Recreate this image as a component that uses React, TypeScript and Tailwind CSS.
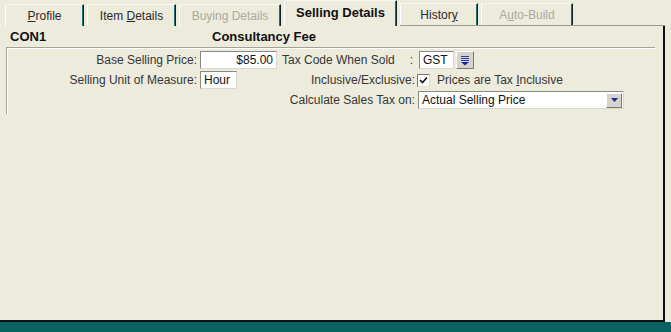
import React from "react";

const tabs = [
  { label: "Profile", key: "P", w: "w-[79px]" },
  { label: "Item Details", key: "D", w: "w-[89px]" },
  { label: "Buying Details", key: "", w: "w-[102px]", disabled: true },
];

function Accel({ text, ch }: { text: string; ch: string }) {
  if (!ch) return <>{text}</>;
  const i = text.indexOf(ch);
  if (i < 0) return <>{text}</>;
  return (
    <>
      {text.slice(0, i)}
      <span className="underline underline-offset-1">{ch}</span>
      {text.slice(i + 1)}
    </>
  );
}

function Tab({ label, ch, w, disabled, active }: { label: string; ch: string; w: string; disabled?: boolean; active?: boolean }) {
  return (
    <div
      className={`${w} ${active ? "h-[26px] font-bold text-[13px] text-[#111]" : "h-[22px]"} ${disabled ? "text-[#abaaa0]" : active ? "" : "text-[#2a2a2a]"} flex items-center justify-center border-t border-l border-t-[#f8f8f0] border-l-white border-r border-r-[#0c2424] shadow-[inset_-1px_0_0_#1f6e6e] rounded-tl-[2px]`}
    >
      <span className={active ? "pb-[2px]" : "pt-[1px]"}>
        <Accel text={label} ch={ch} />
      </span>
    </div>
  );
}

function Input({ w, value, right }: { w: string; value: string; right?: boolean }) {
  return (
    <div
      className={`${w} h-[18px] bg-white border border-t-[#8a8a84] border-l-[#8a8a84] border-r-[#d8d8d0] border-b-[#d8d8d0] px-[3px] flex items-center ${right ? "justify-end" : ""} text-[#111]`}
    >
      {value}
    </div>
  );
}

export default function App() {
  return (
    <div className="w-[671px] h-[332px] bg-[#ecebdc] font-['Liberation_Sans',Arial,sans-serif] text-[12px] text-[#363636] flex flex-col overflow-hidden">
      <div className="flex items-end h-[26px] pl-[5px] gap-[3px]">
        {tabs.map((t) => (
          <Tab key={t.label} label={t.label} ch={t.key} w={t.w} disabled={t.disabled} />
        ))}
        <Tab label="Selling Details" ch="g" w="w-[113px]" active />
        <div className="flex-1 mr-[6px] h-[26px] border-b border-[#9c9b92] flex items-end gap-[3px]">
          <Tab label="History" ch="y" w="w-[78px]" />
          <Tab label="Auto-Build" ch="u" w="w-[92px]" disabled />
        </div>
      </div>

      <div className="w-[665px] h-[296px] border-r-2 border-r-[#111] border-b-2 border-b-[#111] flex flex-col">
        <div className="flex h-[21px] items-center pl-[10px] pt-[1px] font-bold text-[13px] text-[#111]">
          <span className="w-[202px]">CON1</span>
          <span>Consultancy Fee</span>
        </div>

        <div className="ml-[6px] w-[649px] h-[67px] border-t border-l border-[#a4a39a] shadow-[inset_1px_1px_0_#ffffff] flex flex-col gap-[2px] pt-[3px]">
          <div className="flex items-center h-[18px]">
            <span className="w-[190px] text-right">Base Selling Price:</span>
            <div className="ml-[3px] w-[80px]">
              <Input w="w-[77px]" value="$85.00" right />
            </div>
            <div className="w-[135px] flex justify-between pl-[2px] pr-[2px]">
              <span>Tax Code When Sold</span>
              <span>:</span>
            </div>
            <div className="ml-[4px] flex items-center gap-[2px]">
              <Input w="w-[35px]" value="GST" />
              <div className="w-[18px] h-[18px] bg-[#d6d3ca] border border-t-white border-l-white border-r-[#7a7a72] border-b-[#7a7a72] flex items-center justify-center">
                <svg width="10" height="11" viewBox="0 0 10 11">
                  <rect x="1" y="1" width="8" height="1" fill="#2b3bb0" />
                  <rect x="1" y="3" width="8" height="1" fill="#2b3bb0" />
                  <rect x="1" y="5" width="8" height="1" fill="#2b3bb0" />
                  <path d="M1 7 H9 L5 10.5 Z" fill="#1a2a9a" />
                </svg>
              </div>
            </div>
          </div>

          <div className="flex items-center h-[18px]">
            <span className="w-[190px] text-right">Selling Unit of Measure:</span>
            <div className="ml-[3px] w-[80px]">
              <Input w="w-[37px]" value="Hour" />
            </div>
            <span className="w-[135px] text-right">Inclusive/Exclusive:</span>
            <div className="ml-[2px] flex items-center">
              <div className="w-[13px] h-[13px] bg-white border border-t-[#7a7a72] border-l-[#7a7a72] border-r-[#e0e0d8] border-b-[#e0e0d8] flex items-center justify-center">
                <svg width="9" height="9" viewBox="0 0 9 9">
                  <path d="M1 4 L3.5 6.5 L8 1.5" stroke="#111" strokeWidth="1.6" fill="none" />
                </svg>
              </div>
              <span className="ml-[7px]">
                Prices are Tax <span className="underline underline-offset-1">I</span>nclusive
              </span>
            </div>
          </div>

          <div className="flex items-center h-[18px]">
            <span className="w-[190px]" />
            <div className="ml-[3px] w-[80px]" />
            <span className="w-[135px] text-right">Calculate Sales Tax on:</span>
            <div className="ml-[3px] w-[206px] h-[18px] bg-white border border-t-[#8a8a84] border-l-[#8a8a84] border-r-[#d8d8d0] border-b-[#d8d8d0] flex items-center text-[#111]">
              <span className="flex-1 pl-[3px]">Actual Selling Price</span>
              <div className="w-[16px] h-[15px] mr-[1px] bg-[#d6d3ca] border border-t-white border-l-white border-r-[#7a7a72] border-b-[#7a7a72] flex items-center justify-center">
                <svg width="7" height="4" viewBox="0 0 7 4">
                  <path d="M0 0 H7 L3.5 4 Z" fill="#1a2a9a" />
                </svg>
              </div>
            </div>
          </div>
        </div>
      </div>

      <div className="flex-1 bg-[#0b6262]" />
    </div>
  );
}
